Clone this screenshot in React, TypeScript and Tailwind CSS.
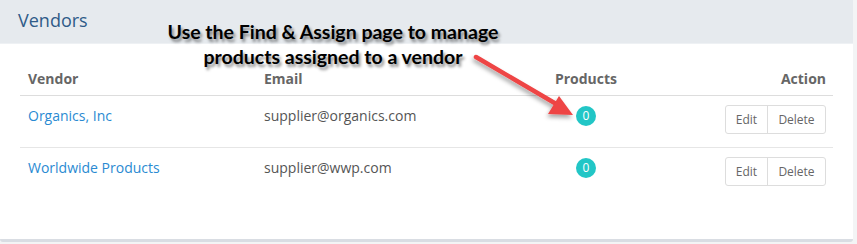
import React from 'react';

interface Vendor {
  name: string;
  email: string;
  products: number;
}

const vendors: Vendor[] = [
  { name: 'Organics, Inc', email: 'supplier@organics.com', products: 0 },
  { name: 'Worldwide Products', email: 'supplier@wwp.com', products: 0 },
];

function Callout() {
  return (
    <>
      {/* Annotation text */}
      <div
        className="absolute left-[113px] top-[19px] w-[440px] text-center text-[19.5px] font-bold leading-[25px] text-black"
        style={{ fontFamily: 'Lato, "Noto Sans", sans-serif', textShadow: '2px 3px 3px rgba(0,0,0,0.45)' }}
      >
        <div>Use the Find &amp; Assign page to manage</div>
        <div>products assigned to a vendor</div>
      </div>
      {/* Arrow */}
      <svg className="absolute left-[460px] top-[45px] overflow-visible" width="130" height="85" viewBox="0 0 130 85">
        <defs>
          <filter id="sh" x="-20%" y="-20%" width="150%" height="150%">
            <feDropShadow dx="-1" dy="3" stdDeviation="2" floodColor="#000" floodOpacity="0.35" />
          </filter>
        </defs>
        <g filter="url(#sh)">
          <line x1="16" y1="12" x2="98" y2="60" stroke="#ee4444" strokeWidth="4.5" strokeLinecap="round" />
          <polygon points="113,70 88,69 99,51" fill="#ee4444" />
        </g>
      </svg>
    </>
  );
}

export default function App() {
  return (
    <div
      className="relative w-[857px] h-[244px] bg-[#f3f4f5] overflow-hidden"
      style={{ fontFamily: '"Open Sans", "Noto Sans", sans-serif' }}
    >
      <div className="w-[853px] h-[242px] bg-white border-b-[3px] border-[#d9dde3] rounded-b-[3px] flex flex-col">
        <div className="h-[44px] bg-[#e6eaee] border-b border-[#eef1f4] px-[18px] flex items-center">
          <h2 className="text-[18px] text-[#2f5b88] leading-none -mt-[4px]">Vendors</h2>
        </div>
        <div className="px-5 pt-[18px]">
          <div className="grid grid-cols-[236px_230px_200px_148px] h-[34px] items-center border-b border-[#dddddd] text-[14px] font-bold text-[#666666]">
            <div className="pl-2">Vendor</div>
            <div className="pl-2">Email</div>
            <div className="text-center">Products</div>
            <div className="text-right pr-2">Action</div>
          </div>
          {vendors.map((v, i) => (
            <div
              key={v.name}
              className={`grid grid-cols-[236px_230px_200px_148px] h-[52px] items-start text-[14px] ${
                i < vendors.length - 1 ? 'border-b border-[#e6e6e6]' : ''
              }`}
            >
              <div className="pl-2 pt-[10px] leading-[20px] text-[#2a8ad2]">{v.name}</div>
              <div className="pl-2 pt-[10px] leading-[20px] text-[#555555]">{v.email}</div>
              <div className="pt-[10px] flex justify-center">
                <span className="w-[20px] h-[20px] rounded-full bg-[#22c6c6] text-white text-[12px] leading-[20px] text-center">
                  {v.products}
                </span>
              </div>
              <div className="pt-[9px] pr-2 flex justify-end">
                <div className="flex h-[29px] border border-[#dddddd] rounded-[3px] text-[12px] text-[#666666]">
                  <button className="w-[42px] border-r border-[#dddddd]">Edit</button>
                  <button className="w-[57px]">Delete</button>
                </div>
              </div>
            </div>
          ))}
        </div>
      </div>
      <Callout />
    </div>
  );
}
